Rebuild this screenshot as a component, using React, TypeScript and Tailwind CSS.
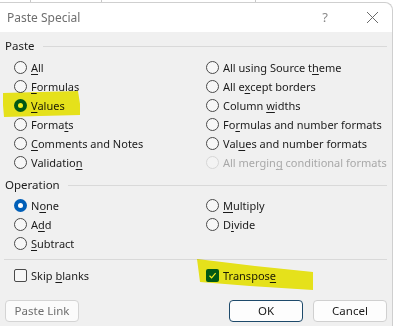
import React from "react";

type Opt = { pre: string; key: string; post: string; checked?: boolean; disabled?: boolean };

const Radio = ({ checked, disabled }: { checked?: boolean; disabled?: boolean }) => {
  if (checked) {
    return (
      <span className="w-[13px] h-[13px] rounded-full bg-[#005fb8] flex items-center justify-center shrink-0">
        <span className="w-[5px] h-[5px] rounded-full bg-white" />
      </span>
    );
  }
  return (
    <span
      className={`w-[13px] h-[13px] rounded-full border shrink-0 ${
        disabled ? "border-[#d6d6d6] bg-[#f3f3f3]" : "border-[#4a4a4a] bg-[#f7f7f7]"
      }`}
    />
  );
};

const Check = ({ checked }: { checked?: boolean }) => {
  if (checked) {
    return (
      <span className="w-[13px] h-[13px] rounded-[2px] bg-[#005fb8] flex items-center justify-center shrink-0">
        <svg width="9" height="9" viewBox="0 0 9 9">
          <path d="M1.5 4.8 L3.6 6.8 L7.6 2.2" fill="none" stroke="white" strokeWidth="1.2" />
        </svg>
      </span>
    );
  }
  return <span className="w-[13px] h-[13px] rounded-[2px] border border-[#4a4a4a] bg-[#f7f7f7] shrink-0" />;
};

const Label = ({ o }: { o: Opt }) => (
  <span className={`whitespace-nowrap ${o.disabled ? "text-[#a8a8a8]" : "text-[#1b1b1b]"}`}>
    {o.pre}
    <span className="underline underline-offset-[2px]">{o.key}</span>
    {o.post}
  </span>
);

const RadioRow = ({ o }: { o: Opt }) => (
  <div className="h-[19px] flex items-center gap-[4px]">
    <Radio checked={o.checked} disabled={o.disabled} />
    <Label o={o} />
  </div>
);

const pasteLeft: Opt[] = [
  { pre: "", key: "A", post: "ll" },
  { pre: "", key: "F", post: "ormulas" },
  { pre: "", key: "V", post: "alues", checked: true },
  { pre: "Forma", key: "t", post: "s" },
  { pre: "", key: "C", post: "omments and Notes" },
  { pre: "Validatio", key: "n", post: "" },
];

const pasteRight: Opt[] = [
  { pre: "All using Source t", key: "h", post: "eme" },
  { pre: "All e", key: "x", post: "cept borders" },
  { pre: "Column ", key: "w", post: "idths" },
  { pre: "Fo", key: "r", post: "mulas and number formats" },
  { pre: "Val", key: "u", post: "es and number formats" },
  { pre: "All mergin", key: "g", post: " conditional formats", disabled: true },
];

const opLeft: Opt[] = [
  { pre: "N", key: "o", post: "ne", checked: true },
  { pre: "A", key: "d", post: "d" },
  { pre: "", key: "S", post: "ubtract" },
];

const opRight: Opt[] = [
  { pre: "", key: "M", post: "ultiply" },
  { pre: "D", key: "i", post: "vide" },
];

const Section = ({ title }: { title: string }) => (
  <div className="h-[16px] flex items-center pl-[5px] pr-[5px]">
    <span className="text-[#1b1b1b] text-[11.5px]">{title}</span>
    <span className="flex-1 h-px bg-[#d9d9d9] ml-[8px]" />
  </div>
);

export default function App() {
  return (
    <div
      className="relative w-[393px] h-[326px] overflow-hidden bg-white text-[11px] leading-none"
      style={{ fontFamily: '"Noto Sans", "Open Sans", sans-serif' }}
    >
      <div className="h-[2px] relative bg-white">
        <span className="absolute left-[30px] top-0 h-[2px] w-px bg-[#c8c8c8]" />
        <span className="absolute left-[101px] top-0 h-[2px] w-px bg-[#c8c8c8]" />
        <span className="absolute left-[255px] top-0 h-[2px] w-px bg-[#c8c8c8]" />
      </div>
      <div className="border-t border-r border-[#cfcfcf] rounded-tr-[8px] bg-[#f0f0f0] h-[324px]">
        <div className="h-[29px] bg-white rounded-tr-[8px] flex items-center pl-[7px] pr-[13px]">
          <span className="text-[12px] text-[#6e6e6e]">Paste Special</span>
          <span className="ml-auto text-[13px] text-[#8a8a8a] mr-[38px]">?</span>
          <svg width="13" height="13" viewBox="0 0 13 13">
            <path d="M1 1 L12 12 M12 1 L1 12" stroke="#6a6a6a" strokeWidth="1" />
          </svg>
        </div>

        <div className="pt-[6px]">
          <Section title="Paste" />
          <div className="mt-[4px] flex">
            <div className="w-[206px] pl-[14px]">
              {pasteLeft.map((o) => (
                <RadioRow key={o.pre + o.key} o={o} />
              ))}
            </div>
            <div>
              {pasteRight.map((o) => (
                <RadioRow key={o.pre + o.key} o={o} />
              ))}
            </div>
          </div>

          <div className="mt-[5px]">
            <Section title="Operation" />
          </div>
          <div className="mt-[3px] flex">
            <div className="w-[206px] pl-[14px]">
              {opLeft.map((o) => (
                <RadioRow key={o.pre + o.key} o={o} />
              ))}
            </div>
            <div>
              {opRight.map((o) => (
                <RadioRow key={o.pre + o.key} o={o} />
              ))}
            </div>
          </div>

          <div className="mt-[6px] ml-[4px] mr-[5px] h-px bg-[#d9d9d9]" />

          <div className="mt-[6px] flex">
            <div className="w-[206px] pl-[14px] h-[19px] flex items-center gap-[4px]">
              <Check />
              <span className="text-[#1b1b1b]">
                Skip <span className="underline underline-offset-[2px]">b</span>lanks
              </span>
            </div>
            <div className="h-[19px] flex items-center gap-[4px]">
              <Check checked />
              <span className="text-[#1b1b1b]">
                Transpos<span className="underline underline-offset-[2px]">e</span>
              </span>
            </div>
          </div>

          <div className="mt-[15px] flex px-[5px]">
            <button className="w-[74px] h-[22px] rounded-[4px] border border-[#d4d4d4] bg-[#fbfbfb] text-[#6e6e6e] text-[11.5px]">
              Paste Link
            </button>
            <button className="ml-auto w-[74px] h-[22px] rounded-[4px] border border-[#1e4a6b] bg-[#fdfdfd] text-[#1b1b1b] text-[11.5px]">
              OK
            </button>
            <button className="ml-[10px] w-[74px] h-[22px] rounded-[4px] border border-[#d0d0d0] bg-[#fdfdfd] text-[#1b1b1b] text-[11.5px]">
              Cancel
            </button>
          </div>
        </div>
      </div>

      <svg
        className="absolute inset-0 pointer-events-none mix-blend-multiply"
        width="393"
        height="326"
        viewBox="0 0 393 326"
      >
        <polygon points="3,93 40,92 78,91 80,104 80,115 40,116 4,117 3,105" fill="#f4ef1c" />
        <polygon points="197,259 255,266 313,272 313,290 250,286 200,282" fill="#f4ef1c" />
      </svg>
    </div>
  );
}
